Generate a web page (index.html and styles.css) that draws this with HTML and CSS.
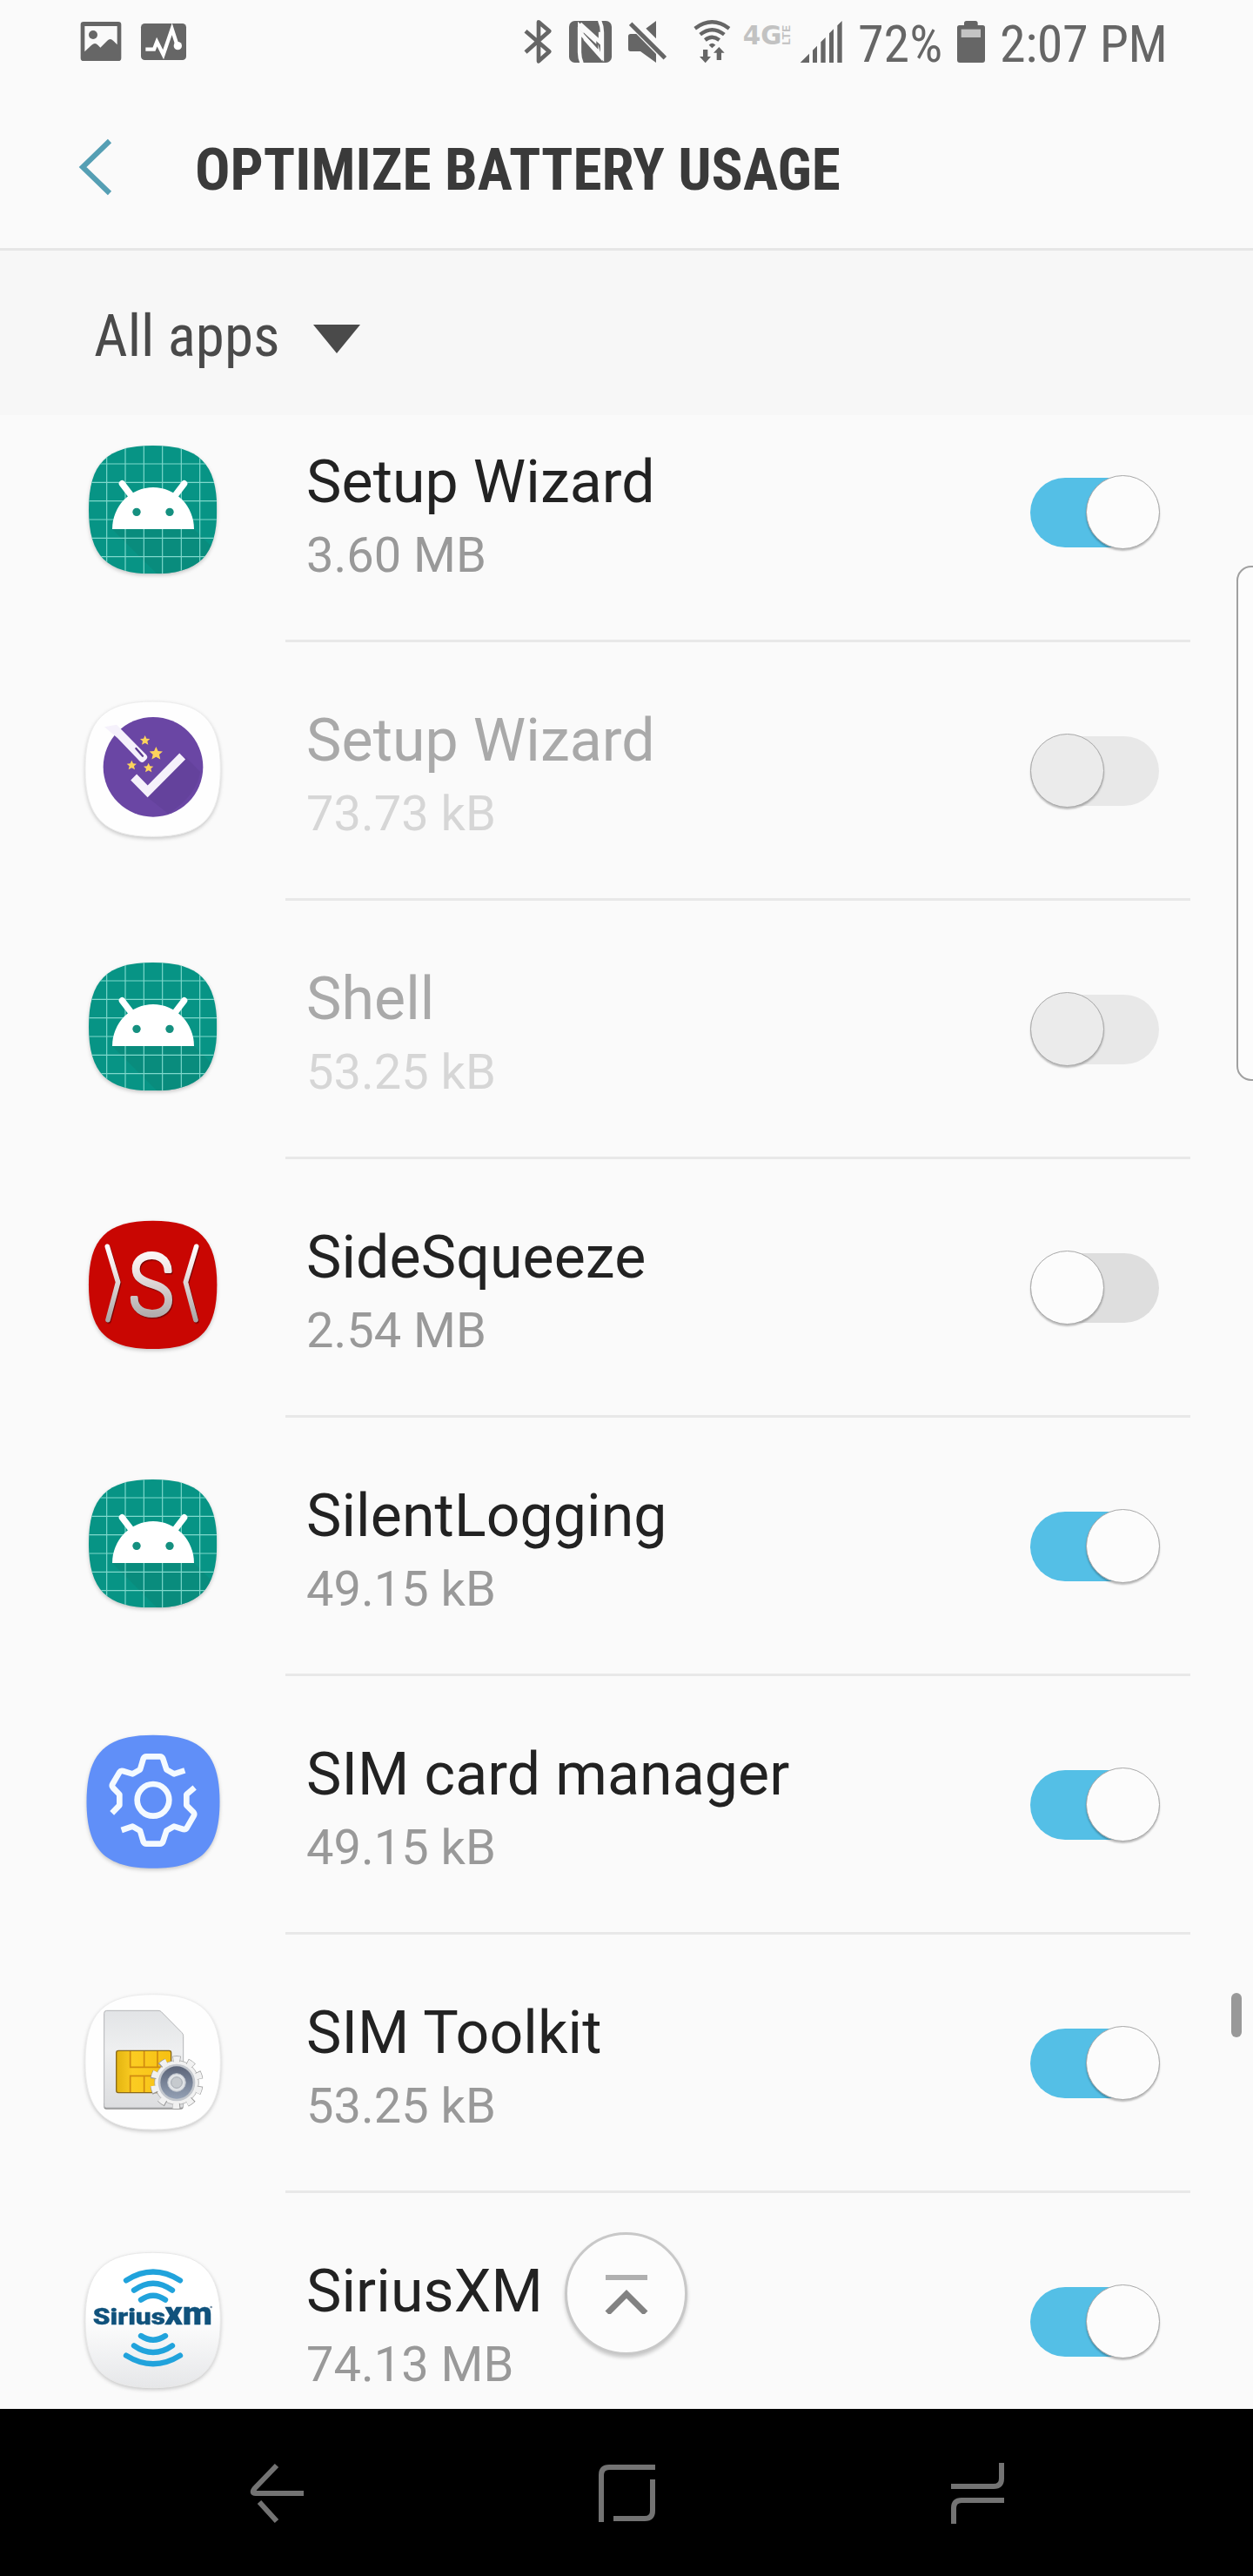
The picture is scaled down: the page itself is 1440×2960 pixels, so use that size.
FILE: index.html
```html
<!DOCTYPE html>
<html lang="en">
<head>
  <meta charset="UTF-8" />
  <meta name="viewport" content="width=device-width, initial-scale=1.0"/>
  <title>Optimize battery usage</title>
  <link rel="stylesheet" href="styles.css">
</head>
<body>

  <!-- Shared shapes -->
  <svg class="defs" width="0" height="0">
    <defs>
      <linearGradient id="silver" gradientUnits="userSpaceOnUse" x1="0" y1="150" x2="0" y2="415">
        <stop offset="0" stop-color="#fff"/>
        <stop offset="0.3" stop-color="#f3e9e9"/>
        <stop offset="1" stop-color="#a9a5a5"/>
      </linearGradient>
      <linearGradient id="plate" x1="0" y1="0" x2="0" y2="1">
        <stop offset="0.45" stop-color="#fff"/>
        <stop offset="1" stop-color="#e6e7e9"/>
      </linearGradient>
      <linearGradient id="card" x1="0" y1="0" x2="0" y2="1">
        <stop offset="0" stop-color="#e2e4e6"/>
        <stop offset="0.4" stop-color="#eeeff0"/>
        <stop offset="1" stop-color="#dcdddf"/>
      </linearGradient>
      <linearGradient id="steel" x1="0" y1="0" x2="0" y2="1">
        <stop offset="0" stop-color="#5b6478"/>
        <stop offset="1" stop-color="#93a0b4"/>
      </linearGradient>
      <linearGradient id="gold" x1="0" y1="0" x2="1" y2="0">
        <stop offset="0" stop-color="#e3b411"/>
        <stop offset="0.3" stop-color="#fbcc22"/>
        <stop offset="1" stop-color="#f6c012"/>
      </linearGradient>
      <clipPath id="android-clip">
        <path d="M287 96C446 96 508 158 508 317S446 538 287 538S66 476 66 317S128 96 287 96Z"/>
      </clipPath>
      <path id="squircle" d="M0 -233C168 -233 233 -168 233 0S168 233 0 233S-233 168 -233 0S-168 -233 0 -233Z"/>
      <path id="star" d="M0 -17L5 -6L17 -5L8 3L11 15L0 9L-11 15L-8 3L-17 -5L-5 -6Z"/>
      <symbol id="android" viewBox="0 0 600 600">
        <g clip-path="url(#android-clip)">
          <path fill="#079485" d="M60 90H515V545H60Z"/>
          <path fill="#0b8577" d="M147 384H429L508 463V545H308Z" opacity=".55"/>
          <path fill="none" stroke="#7fd8cc" stroke-width="3.5" d="M128 90V545M192 90V545M256 90V545M320 90V545M385 90V545M449 90V545M60 159H515M60 223H515M60 287H515M60 351H515M60 415H515M60 479H515"/>
        </g>
        <path fill="#fff" d="M147 384A141 144 0 0 1 429 384Z"/>
        <path fill="none" stroke="#fff" stroke-width="22" stroke-linecap="round" d="M181 227L212 268M395 227L364 268"/>
        <circle fill="#159080" cx="231" cy="325" r="14"/>
        <circle fill="#159080" cx="345" cy="325" r="14"/>
      </symbol>
    </defs>
  </svg>

  <div class="screen">
    <div class="status-bar">
      <div class="status-left">
        <svg width="60" height="100" viewBox="90 0 180 300">
          <path fill="#666" fill-rule="evenodd" d="M108 75H228Q238 75 238 85V200Q238 210 228 210H108Q98 210 98 200V85Q98 75 108 75ZM112 90V178L136 155Q148 144 158 156L166 164L190 140Q200 129 211 141L224 154V90Z"/>
          <circle fill="#666" cx="141" cy="120" r="15"/>
        </svg>
        <svg width="60" height="100" viewBox="294 0 180 300">
          <rect fill="#666" x="306" y="81" width="156" height="126" rx="13"/>
          <path fill="none" stroke="#fff" stroke-width="13" d="M322 170H351L361 144L383 188L413 100L431 156"/>
          <circle fill="#fff" cx="433" cy="158" r="14"/>
        </svg>
      </div>
      <div class="status-right">
        <svg width="45" height="100" viewBox="60 0 135 300">
          <path fill="none" stroke="#666" stroke-width="14" stroke-linejoin="round" d="M72 107L154 178L117 211V76L154 107L72 180"/>
        </svg>
        <svg width="67" height="100" viewBox="195 0 201 300">
          <rect fill="#666" x="222" y="72" width="147" height="144" rx="20"/>
          <path fill="none" stroke="#fafafa" stroke-width="13" d="M327 70Q336 90 336 112V196L258 110V180Q258 200 266 218M260 82L330 146V110"/>
          <path fill="#fafafa" d="M252 74L316 138V152L272 112V138L338 212L322 152V170L252 96Z"/>
        </svg>
        <svg width="73" height="100" viewBox="396 0 219 300">
          <path fill="#666" d="M434 117H454L522 186V216L468 177H434Q426 177 426 169V125Q426 117 434 117ZM487 98L522 72V133Z"/>
          <path fill="none" stroke="#666" stroke-width="15" d="M434 82L553 200"/>
        </svg>
        <svg width="61" height="100" viewBox="615 0 183 300">
          <g fill="none" stroke="#666" stroke-width="13">
            <path d="M656 98Q715 54 774 98M674 119Q715 86 757 119M691 138Q715 119 740 138"/>
          </g>
          <path fill="#666" d="M704 155Q715 144 727 155L715 166ZM684 171H700V195H711L692 217L672 195H684ZM731 207V182H720L739 162L758 182H747V207Z"/>
        </svg>
        <svg width="66" height="100" viewBox="798 0 198 300">
          <text class="net-label" x="821" y="152" textLength="134" lengthAdjust="spacingAndGlyphs">4G</text>
          <text class="net-lte" transform="translate(985 155) rotate(-90)" textLength="68" lengthAdjust="spacingAndGlyphs">LTE</text>
        </svg>
        <svg width="60" height="100" viewBox="996 0 180 300">
          <path fill="#666" d="M1019 216L1050 185V216ZM1062 216V173L1077 158V216ZM1090 216V145L1106 129V216ZM1119 216V115L1134 100V216ZM1147 216V88L1163 72V216Z"/>
        </svg>
        <span class="percent">72%</span>
        <svg class="battery" width="34" height="100" viewBox="417 0 102 300">
          <path fill="#666" d="M452 72H483Q491 72 491 80V87H508Q516 87 516 95V207Q516 216 507 216H429Q420 216 420 207V95Q420 87 428 87H444V80Q444 72 452 72Z"/>
          <path fill="#c4c4c4" d="M434 101H501V129H434Z"/>
        </svg>
        <span class="clock">2:07 PM</span>
      </div>
    </div>

    <header class="title-bar">
      <svg class="back" width="44" height="70" viewBox="0 0 44 70">
        <path fill="none" stroke="#559fb4" stroke-width="6" d="M38 5L7 35L38 65"/>
      </svg>
      <h1>OPTIMIZE BATTERY USAGE</h1>
    </header>

    <div class="filter">
      <span class="filter-label">All apps</span>
      <svg width="54" height="34" viewBox="0 0 54 34"><path fill="#4a4a4a" d="M0 0H54L27 33Z"/></svg>
    </div>

    <main class="list">
      <ul class="apps">
        <li class="app">
          <svg class="icon" viewBox="0 0 600 600"><use href="#android"/></svg>
          <div class="info">
            <div class="name">Setup Wizard</div>
            <div class="size">3.60 MB</div>
          </div>
          <div class="switch on"></div>
        </li>
        <li class="app disabled">
          <svg class="icon" viewBox="0 -9 600 600">
            <use href="#squircle" x="287" y="311" fill="#fefefe" stroke="#ececec" stroke-width="3"/>
            <circle fill="#6a46a4" cx="288" cy="304" r="172"/>
            <path fill="#5d3d94" opacity=".5" d="M269 409L400 270L450 320Q440 400 340 465Z"/>
            <path fill="#f5f1fb" d="M120 166L162 158L264 262Q272 271 264 278L256 286Q249 291 242 284L165 204Z"/>
            <path fill="none" stroke="#5b3d90" stroke-width="7" stroke-linecap="round" d="M229 240L252 266"/>
            <path fill="none" stroke="#f5f1fb" stroke-width="29" d="M221 339L269 388L389 267"/>
            <g fill="#fcd35c">
              <use href="#star" x="260" y="212"/>
              <use href="#star" transform="translate(298 257) scale(1.35)"/>
              <use href="#star" x="214" y="298"/>
              <use href="#star" x="272" y="307"/>
            </g>
          </svg>
          <div class="info">
            <div class="name">Setup Wizard</div>
            <div class="size">73.73 kB</div>
          </div>
          <div class="switch"></div>
        </li>
        <li class="app disabled">
          <svg class="icon" viewBox="0 0 600 600"><use href="#android"/></svg>
          <div class="info">
            <div class="name">Shell</div>
            <div class="size">53.25 kB</div>
          </div>
          <div class="switch"></div>
        </li>
        <li class="app">
          <svg class="icon" viewBox="0 -27 600 600">
            <use href="#squircle" transform="translate(287 289) scale(.949)" fill="#c90602"/>
            <g class="raised">
              <path fill="none" stroke="url(#silver)" stroke-width="17" stroke-linecap="round" stroke-linejoin="round" d="M130 157L167 280L132 410M437 157L400 280L435 410"/>
              <text class="squeeze-s" x="203" y="392" textLength="156" lengthAdjust="spacingAndGlyphs" fill="url(#silver)" stroke="url(#silver)">S</text>
            </g>
          </svg>
          <div class="info">
            <div class="name">SideSqueeze</div>
            <div class="size">2.54 MB</div>
          </div>
          <div class="switch"></div>
        </li>
        <li class="app">
          <svg class="icon" viewBox="0 0 600 600"><use href="#android"/></svg>
          <div class="info">
            <div class="name">SilentLogging</div>
            <div class="size">49.15 kB</div>
          </div>
          <div class="switch on"></div>
        </li>
        <li class="app">
          <svg class="icon" viewBox="0 -15 600 600">
            <use href="#squircle" transform="translate(288 301) scale(.985)" fill="#608ff8"/>
            <g fill="none" stroke="#f4faff" stroke-width="20" stroke-linejoin="round">
              <circle cx="288" cy="295" r="55"/>
              <path d="M397 193L360 205L334 190L322 153Q319 145 311 145H265Q257 145 254 153L243 190L217 205L184 195Q176 193 172 199L148 240Q144 247 150 253L172 276V313L146 340"/>
              <path d="M179 399L217 386L243 401L254 438Q257 446 265 446H311Q319 446 322 438L334 401L360 386L392 396Q400 397 404 391L428 350Q432 343 427 337L403 313V276L431 252"/>
            </g>
          </svg>
          <div class="info">
            <div class="name">SIM card manager</div>
            <div class="size">49.15 kB</div>
          </div>
          <div class="switch on"></div>
        </li>
        <li class="app">
          <svg class="icon" viewBox="0 -24 600 600">
            <use href="#squircle" x="287" y="298" fill="#fefefe" stroke="#ececec" stroke-width="3"/>
            <path fill="#8d8d8d" d="M118 440H392V452Q392 461 384 461H127Q118 461 118 452Z"/>
            <path fill="url(#card)" stroke="#b4b5b7" stroke-width="3" d="M128 121H306Q312 121 316 125L387 197Q392 202 392 208V449Q392 456 385 456H127Q119 456 119 449V130Q119 121 128 121Z"/>
            <rect fill="url(#gold)" stroke="#8a6a1c" stroke-width="4" x="161" y="259" width="189" height="145" rx="7"/>
            <path fill="none" stroke="#d08a10" stroke-width="5" d="M209 261V316H350M257 261V316M303 261V316M209 402V346H350M257 402V346M303 402V346"/>
            <circle fill="#f1f1f1" stroke="#999" stroke-width="2" cx="369" cy="369" r="76"/>
            <circle fill="none" stroke="#999" stroke-width="20" stroke-dasharray="26 25.520" cx="369" cy="369" r="82" transform="rotate(-99 369 369)"/>
            <circle fill="none" stroke="#f1f1f1" stroke-width="20" stroke-dasharray="22 28.265" cx="369" cy="369" r="80" transform="rotate(-97.800 369 369)"/>
            <circle fill="#c3c7cd" cx="369" cy="369" r="64"/>
            <circle fill="url(#steel)" cx="369" cy="369" r="56"/>
            <circle fill="#dfe2e5" stroke="#b8bec8" stroke-width="3" cx="369" cy="369" r="31"/>
            <circle fill="#c6cace" stroke="#a4a9b1" stroke-width="3" cx="369" cy="369" r="19"/>
          </svg>
          <div class="info">
            <div class="name">SIM Toolkit</div>
            <div class="size">53.25 kB</div>
          </div>
          <div class="switch on"></div>
        </li>
        <li class="app">
          <svg class="icon" viewBox="0 -33 600 600">
            <use href="#squircle" x="287" y="288" fill="url(#plate)" stroke="#e8e8e8" stroke-width="3"/>
            <g fill="none" stroke="#21a3dc" stroke-width="19" stroke-linecap="round">
              <path d="M195 151Q288 92 381 151M222 185Q288 137 354 185M246 218Q288 188 330 218"/>
              <path d="M246 342Q288 370 330 342M222 376Q288 422 354 376M195 410Q288 468 381 410"/>
            </g>
            <text class="sirius" x="80" y="304" textLength="250" lengthAdjust="spacingAndGlyphs">Sirius</text>
            <text class="sirius xm" x="328" y="304" textLength="164" lengthAdjust="spacingAndGlyphs">xm</text>
            <circle fill="#7a93a8" cx="488" cy="243" r="4"/>
          </svg>
          <div class="info">
            <div class="name">SiriusXM</div>
            <div class="size">74.13 MB</div>
          </div>
          <div class="switch on"></div>
        </li>
      </ul>
    </main>

    <nav class="nav-bar">
      <svg width="70" height="80" viewBox="284 2825 70 80">
        <path d="M318 2833L293 2859Q288 2865 294 2865H349M298 2875L318 2897"/>
      </svg>
      <svg width="70" height="80" viewBox="685 2825 70 80">
        <path d="M690 2898V2844Q690 2835 699 2835H752M749 2849V2885Q749 2894 740 2894H704"/>
      </svg>
      <svg width="70" height="80" viewBox="1088 2825 70 80">
        <path d="M1151 2830V2848Q1151 2857 1142 2857H1093M1154 2873H1105Q1096 2873 1096 2882V2900"/>
      </svg>
    </nav>

    <!-- Floating controls over the list -->
    <div class="edge-handle"></div>
    <div class="scroll-thumb"></div>
    <button class="go-top">
      <svg width="50" height="46" viewBox="0 0 50 46">
        <path fill="none" stroke="#b0b0b0" stroke-width="6" d="M1 4H49"/>
        <path fill="none" stroke="#828282" stroke-width="7" d="M3 45L25 23L47 45"/>
      </svg>
    </button>
  </div>

</body>
</html>
```

FILE: styles.css
```css
body {
  margin: 0;
  font-family: Roboto, "Liberation Sans", sans-serif;
  background: #fafafa;
}
.defs {
  position: absolute;
}
.screen {
  position: relative;
  display: flex;
  flex-direction: column;
  width: 1440px;
  height: 2960px;
  overflow: hidden;
  background: #fafafa;
}

/* Status bar */
.status-bar {
  display: flex;
  justify-content: space-between;
  height: 100px;
  color: #666;
  font-family: "Roboto Condensed", Roboto, sans-serif;
  font-stretch: condensed;
  font-size: 60px;
  line-height: 101px;
}
.status-left {
  display: flex;
  gap: 8px;
  padding-left: 90px;
}
.status-right {
  display: flex;
  width: 840px;
}
.status-right svg,
.status-left svg {
  flex: none;
}
.percent {
  width: 113px;
  padding-left: 14px;
  white-space: nowrap;
}
.clock {
  padding-left: 16px;
  letter-spacing: -0.4px;
  white-space: nowrap;
}
.net-label {
  font: bold 88px "DejaVu Sans", sans-serif;
  fill: #c2c2c2;
}
.net-lte {
  font: bold 38px Roboto, sans-serif;
  fill: #c2c2c2;
}

/* Header */
.title-bar {
  display: flex;
  align-items: center;
  box-sizing: border-box;
  height: 188px;
  padding: 0 0 2px 88px;
  border-bottom: 3px solid #e6e6e6;
}
.back {
  flex: none;
  margin-right: 92px;
}
h1 {
  margin: 0;
  padding-top: 7px;
  color: #3a3a3a;
  font-family: "Roboto Condensed", Roboto, sans-serif;
  font-stretch: condensed;
  font-size: 67.3px;
  font-weight: bold;
  line-height: 80px;
  white-space: nowrap;
}
.filter {
  display: flex;
  align-items: center;
  box-sizing: border-box;
  height: 189px;
  padding-left: 108px;
  background: #f7f7f7;
  color: #4a4a4a;
}
.filter-label {
  width: 252px;
  padding-top: 7px;
  font-family: "Roboto Condensed", Roboto, sans-serif;
  font-stretch: condensed;
  font-size: 67px;
  line-height: 80px;
  white-space: nowrap;
}
.filter svg {
  margin-top: 14px;
}

/* App list */
.list {
  height: 2291px;
  overflow: hidden;
}
.apps {
  list-style: none;
  margin: -36px 0 0;
  padding: 0;
}
.app {
  position: relative;
  display: flex;
  align-items: flex-start;
  height: 297px;
  padding-left: 80px;
}
.app::after {
  content: "";
  position: absolute;
  left: 328px;
  right: 72px;
  bottom: 0;
  height: 3px;
  background: #e8e8e8;
}
.icon {
  flex: none;
  width: 200px;
  height: 200px;
  margin-top: 39px;
  filter: drop-shadow(0 2px 2px rgba(0, 0, 0, 0.2));
}
.info {
  width: 832px;
  padding: 73px 0 0 72px;
}
.name {
  color: #222;
  font-size: 68px;
  line-height: 80px;
  letter-spacing: 0.1px;
}
.size {
  margin-top: 8px;
  color: #999;
  font-size: 56px;
  line-height: 72px;
}
.disabled .name {
  color: #a9a9a9;
}
.disabled .size {
  color: #d6d6d6;
}

.switch {
  position: relative;
  flex: none;
  width: 148px;
  height: 80px;
  margin-top: 108px;
  border-radius: 40px;
  background: #dedede;
}
.switch::after {
  content: "";
  position: absolute;
  top: -3px;
  left: 0;
  box-sizing: border-box;
  width: 85px;
  height: 85px;
  border: 1px solid #a8a8a8;
  border-radius: 50%;
  background: #fcfcfc;
  box-shadow: 0 2px 2px rgba(0, 0, 0, 0.25);
}
.switch.on {
  background: #54bfe6;
}
.switch.on::after {
  left: 64px;
}
.disabled .switch {
  background: #e8e8e8;
}
.disabled .switch::after {
  background: #ebebeb;
}

.squeeze-s {
  font: 300 296px Roboto, sans-serif;
  stroke-width: 12px;
  stroke-linejoin: round;
}
.raised {
  filter: drop-shadow(3px 4px 2px rgba(70, 0, 0, 0.6));
}
.sirius {
  font: 900 78px Roboto, sans-serif;
  fill: #10527c;
  stroke: #10527c;
  stroke-width: 1px;
}
.sirius.xm {
  font-size: 108px;
}

/* Bottom navigation */
.nav-bar {
  display: flex;
  flex: 1;
  justify-content: space-between;
  padding: 57px 282px 0 284px;
  background: #000;
}
.nav-bar path {
  fill: none;
  stroke: #737373;
  stroke-width: 6px;
}

/* Overlays */
.edge-handle {
  position: absolute;
  top: 650px;
  left: 1421px;
  width: 30px;
  height: 588px;
  border: 2px solid #a0a0a0;
  border-radius: 20px;
  background: #fcfcfc;
}
.scroll-thumb {
  position: absolute;
  top: 2290px;
  left: 1415px;
  width: 12px;
  height: 51px;
  border-radius: 6px;
  background: #999;
}
.go-top {
  position: absolute;
  top: 2565px;
  left: 649px;
  width: 141px;
  height: 141px;
  padding: 3px 0 0;
  border: 3px solid #c8c8c8;
  border-radius: 50%;
  background: #fcfcfc;
  box-shadow: 0 3px 4px rgba(0, 0, 0, 0.2);
}
```
